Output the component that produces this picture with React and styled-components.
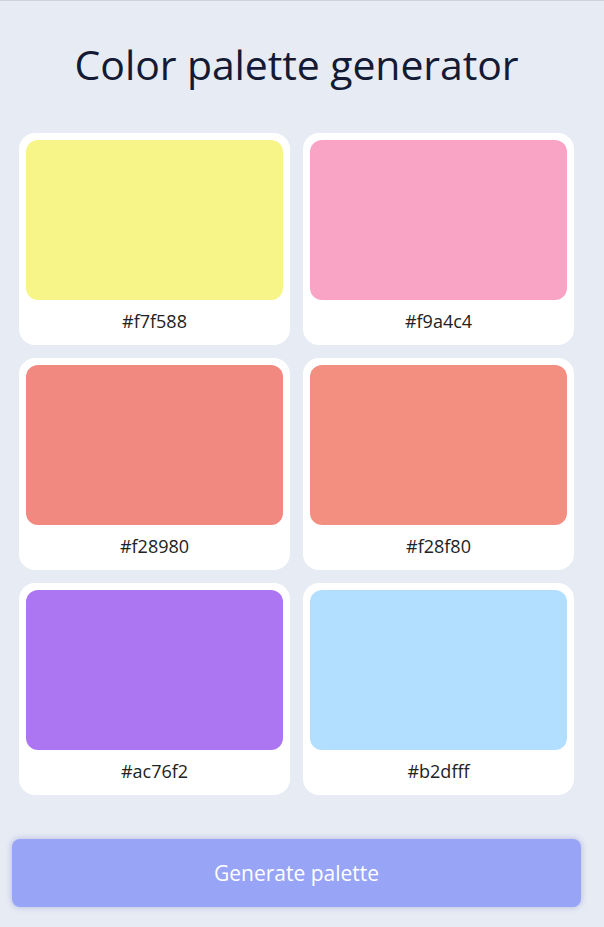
import styled, { createGlobalStyle } from "styled-components";

const GlobalStyle = createGlobalStyle`
  html, body {
    margin: 0;
    padding: 0;
    background: #e6ebf4;
  }
  body {
    font-family: "Open Sans", "Noto Sans", sans-serif;
    border-top: 1px solid #cfd3d9;
  }
`;

const Page = styled.div`
  width: 593px;
  min-height: 926px;
  display: flex;
  flex-direction: column;
  align-items: stretch;
`;

const Title = styled.h1`
  margin: 35px 0 0;
  height: 56px;
  line-height: 56px;
  text-align: center;
  font-size: 41px;
  font-weight: 400;
  color: #141a33;
  letter-spacing: -0.1px;
`;

const Grid = styled.div`
  margin-top: 41px;
  padding: 0 19px;
  display: grid;
  grid-template-columns: 1fr 1fr;
  gap: 13px;
`;

const Card = styled.div`
  background: #ffffff;
  border-radius: 16px;
  padding: 7px 7px 0;
  height: 212px;
  box-sizing: border-box;
  display: flex;
  flex-direction: column;
`;

const Swatch = styled.div`
  height: 160px;
  border-radius: 12px;
  background: ${(p) => p.$color};
`;

const Hex = styled.span`
  margin-top: 9px;
  text-align: center;
  font-size: 18px;
  line-height: 24px;
  color: #222222;
`;

const Footer = styled.div`
  margin-top: 44px;
  padding: 0 12px;
`;

const Button = styled.button`
  width: 100%;
  height: 68px;
  border: none;
  border-radius: 8px;
  background: #98a5f6;
  color: #ffffff;
  font-family: "Open Sans", "Noto Sans", sans-serif;
  font-size: 21px;
  box-shadow: 0 0 6px rgba(120, 120, 200, 0.45);
  cursor: pointer;
`;

const colors = ["#f7f588", "#f9a4c4", "#f28980", "#f28f80", "#ac76f2", "#b2dfff"];

const App = () => {
  return (
    <>
      <GlobalStyle />
      <Page>
        <Title>Color palette generator</Title>
        <Grid>
          {colors.map((c) => (
            <Card key={c}>
              <Swatch $color={c} />
              <Hex>{c}</Hex>
            </Card>
          ))}
        </Grid>
        <Footer>
          <Button>Generate palette</Button>
        </Footer>
      </Page>
    </>
  );
};

export default App;
